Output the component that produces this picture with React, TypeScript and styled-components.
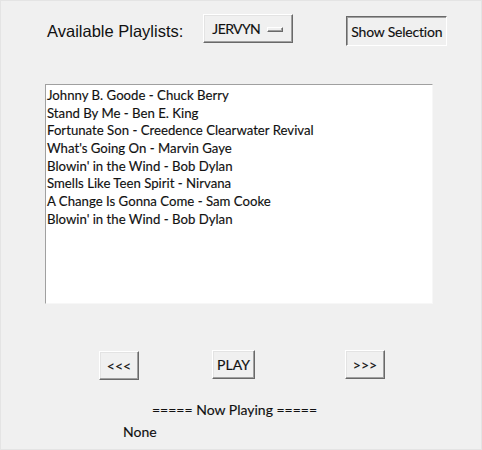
import styled, { createGlobalStyle } from "styled-components";

const GlobalStyle = createGlobalStyle`
    html, body {
        margin: 0;
        padding: 0;
        background: #f0f0f0;
    }
    * {
        box-sizing: border-box;
    }
`;

const uiFont = `"Lato", "Noto Sans", sans-serif`;

// windows cleartype text looks a little heavier than plain Lato
const uiText = `
    font-family: ${uiFont};
    font-size: 14px;
    -webkit-text-stroke: 0.15px #111;
`;

const tracks = [
    "Johnny B. Goode - Chuck Berry",
    "Stand By Me - Ben E. King",
    "Fortunate Son - Creedence Clearwater Revival",
    "What's Going On - Marvin Gaye",
    "Blowin' in the Wind - Bob Dylan",
    "Smells Like Teen Spirit - Nirvana",
    "A Change Is Gonna Come - Sam Cooke",
    "Blowin' in the Wind - Bob Dylan",
];

const Window = styled.div`
    width: 482px;
    height: 450px;
    background: #f0f0f0;
    border: 1px solid #e4e4e4;
    color: #111;
    overflow: hidden;
`;

const TopBar = styled.div`
    display: flex;
    align-items: flex-start;
    height: 83px;
    padding: 13px 0 0 46px;
`;

const Label = styled.span`
    font-family: "Liberation Sans", Arial, sans-serif;
    font-size: 16.5px;
    line-height: 34px;
    margin-right: 20px;
`;

// raised tk widget edge
const raised = `
    border: 1px solid;
    border-color: #ffffff #696969 #696969 #ffffff;
    box-shadow: inset -1px -1px 0 #a0a0a0, inset 1px 1px 0 #e3e3e3;
`;

const MenuButton = styled.div`
    ${raised}
    ${uiText}
    width: 90px;
    height: 29px;
    display: flex;
    align-items: center;
    padding-left: 8px;
    letter-spacing: -0.6px;
`;

const Indicator = styled.span`
    width: 16px;
    height: 5px;
    margin-left: auto;
    margin-right: 9px;
    margin-top: 2px;
    border: 1px solid;
    border-color: #ffffff #696969 #696969 #ffffff;
    box-shadow: inset -1px -1px 0 #a0a0a0;
`;

const ToggleButton = styled.div`
    ${uiText}
    width: 101px;
    height: 30px;
    margin: 2px 0 0 53px;
    border: 1px solid;
    border-color: #696969 #ffffff #ffffff #696969;
    box-shadow: inset 1px 1px 0 #a0a0a0;
    display: flex;
    align-items: center;
    justify-content: center;
    letter-spacing: -0.2px;
`;

const ListBox = styled.ul`
    ${uiText}
    list-style: none;
    margin: 0 0 0 44px;
    padding: 2px 0 0 1px;
    width: 388px;
    height: 220px;
    background: #fff;
    border: 1px solid;
    border-color: #a0a0a0 #f7f7f7 #f7f7f7 #a0a0a0;
    font-size: 13.2px;
`;

const ListItem = styled.li`
    height: 17.7px;
    line-height: 17.7px;
    white-space: nowrap;
`;

const ButtonRow = styled.div`
    display: flex;
    align-items: flex-start;
    margin-top: 46px;
    padding-left: 98px;
`;

const PushButton = styled.div<{ $width: number; $offset: number; $drop?: number }>`
    ${raised}
    ${uiText}
    width: ${p => p.$width}px;
    height: 29px;
    margin-left: ${p => p.$offset}px;
    margin-top: ${p => p.$drop ?? 0}px;
    display: flex;
    align-items: center;
    justify-content: center;
`;

const StatusBlock = styled.div`
    ${uiText}
    margin-top: 19px;
`;

const Heading = styled.div`
    line-height: 22px;
    padding-left: 151px;
`;

const Current = styled.div`
    line-height: 22px;
    padding-left: 122px;
`;

export default function App() {
    return (
        <>
            <GlobalStyle />
            <Window>
                <TopBar>
                    <Label>Available Playlists:</Label>
                    <MenuButton>
                        JERVYN
                        <Indicator />
                    </MenuButton>
                    <ToggleButton>Show Selection</ToggleButton>
                </TopBar>
                <ListBox>
                    {tracks.map((t, i) => (
                        <ListItem key={i}>{t}</ListItem>
                    ))}
                </ListBox>
                <ButtonRow>
                    <PushButton $width={40} $offset={0} $drop={1}>&lt;&lt;&lt;</PushButton>
                    <PushButton $width={43} $offset={73}>PLAY</PushButton>
                    <PushButton $width={40} $offset={90}>&gt;&gt;&gt;</PushButton>
                </ButtonRow>
                <StatusBlock>
                    <Heading>===== Now Playing =====</Heading>
                    <Current>None</Current>
                </StatusBlock>
            </Window>
        </>
    );
}
